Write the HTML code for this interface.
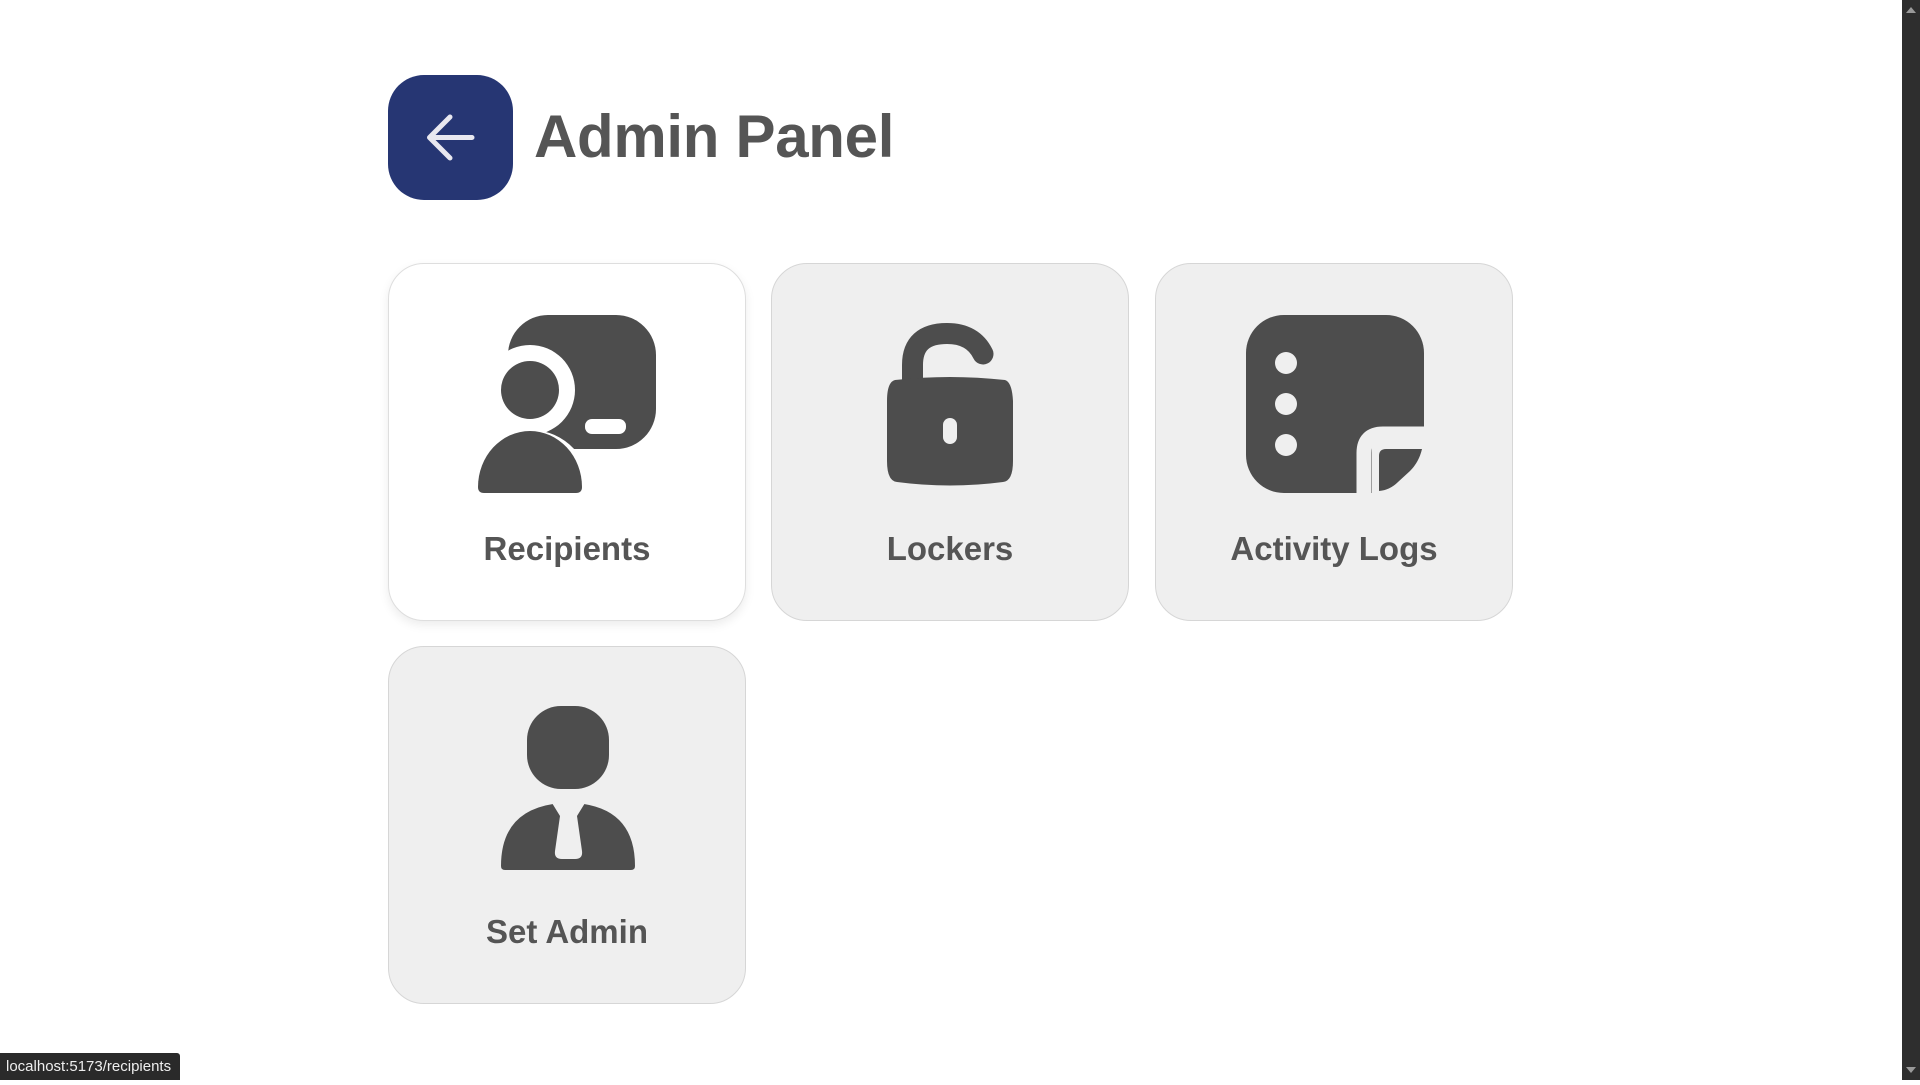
<!DOCTYPE html>
<html><head><meta charset="utf-8"><style>
html,body{margin:0;padding:0;}
body{width:1920px;height:1080px;position:relative;overflow:hidden;background:#fff;font-family:"Liberation Sans",Arial,sans-serif;}
.back{position:absolute;left:388px;top:75px;width:125px;height:125px;border-radius:36px;background:#263673;}
.title{position:absolute;left:534px;top:97px;font-size:60px;font-weight:bold;color:#555;line-height:80px;letter-spacing:-0.3px;}
.card{position:absolute;width:358px;height:358px;border-radius:36px;background:#efefef;border:1px solid #d6d6d6;box-sizing:border-box;}
.card.w{background:#fff;border-color:#dedede;box-shadow:0 4px 10px rgba(0,0,0,0.08);}
.lbl{position:absolute;left:0;right:0;text-align:center;font-size:33px;font-weight:bold;color:#555;}
svg.i{position:absolute;}
.status{position:absolute;left:0;top:1053px;width:180px;height:27px;background:#2a2a2a;color:#eee;font-size:15px;line-height:27px;padding-left:6px;box-sizing:border-box;border-top-right-radius:3px;}
.sb{position:absolute;right:0;top:0;width:18px;height:1080px;background:#2e2e2e;}
</style></head><body>
<div class="back"><svg width="125" height="125" viewBox="0 0 125 125"><path d="M84 62.5H42M62 42L41.5 62.5 62 83" fill="none" stroke="#e8e8f0" stroke-width="5" stroke-linecap="round" stroke-linejoin="round"/></svg></div>
<div class="title">Admin Panel</div>

<div class="card w" style="left:388px;top:263px;">
<svg class="i" style="left:89px;top:51px" width="180" height="180" viewBox="0 0 180 180">
<rect x="30" y="0" width="148" height="134" rx="40" fill="#4d4d4d"/>
<circle cx="52" cy="75" r="45" fill="#fff"/>
<path d="M-8 180 A60 64 0 0 1 114 180Z" fill="#fff"/>
<circle cx="52" cy="75" r="29" fill="#4d4d4d"/>
<path d="M0 172 A52 56 0 0 1 104 172 Q104 178 98 178 L6 178 Q0 178 0 172Z" fill="#4d4d4d"/>
<rect x="107" y="104" width="41" height="15" rx="7" fill="#fff"/>
</svg>
<div class="lbl" style="top:266px">Recipients</div>
</div>

<div class="card" style="left:771px;top:263px;">
<svg class="i" style="left:113px;top:57px" width="130" height="170" viewBox="0 0 130 170">
<path d="M27.5 60V44Q27.5 12.5 62 12.5Q88 12.5 98 33" fill="none" stroke="#4d4d4d" stroke-width="21" stroke-linecap="round"/>
<path d="M10 59Q65 53 120 59Q127 61 128 80V140Q128 160 118 161Q65 168 12 161Q2 160 2 140V80Q2 61 10 59Z" fill="#4d4d4d"/>
<rect x="58" y="97" width="14" height="26" rx="7" fill="#efefef"/>
</svg>
<div class="lbl" style="top:266px">Lockers</div>
</div>

<div class="card" style="left:1155px;top:263px;">
<svg class="i" style="left:90px;top:51px" width="186" height="180" viewBox="0 0 186 180">
<rect x="0" y="0" width="178" height="178" rx="38" fill="#4d4d4d"/>
<path d="M118 182V138Q118 119 137 119H190" fill="none" stroke="#efefef" stroke-width="15"/>
<rect x="126" y="126" width="60" height="60" fill="#efefef"/>
<path d="M133 176V141Q133 134 140 134H176Q173 147 164 156L152 167Q144 175 133 176Z" fill="#4d4d4d"/>
<circle cx="40" cy="48" r="11" fill="#efefef"/>
<circle cx="40" cy="89" r="11" fill="#efefef"/>
<circle cx="40" cy="130" r="11" fill="#efefef"/>
</svg>
<div class="lbl" style="top:266px">Activity Logs</div>
</div>

<div class="card" style="left:388px;top:646px;">
<svg class="i" style="left:112px;top:59px" width="134" height="166" viewBox="0 0 134 166">
<rect x="26" y="0" width="82" height="83" rx="34" fill="#4d4d4d"/>
<path d="M0 160Q0 106 52 98L83 98Q134 106 134 160Q134 164 130 164H4Q0 164 0 160Z" fill="#4d4d4d"/>
<path d="M51 97L59 110L54 145Q53 153 61 153H74Q82 153 81 145L76 110L84 97Z" fill="#efefef"/>
</svg>
<div class="lbl" style="top:266px">Set Admin</div>
</div>

<div class="status">localhost:5173/recipients</div>
<div class="sb">
<svg width="18" height="1080" viewBox="0 0 18 1080"><path d="M4 13L9 7L14 13Z" fill="#9a9a9a"/><path d="M4 1067L9 1073L14 1067Z" fill="#9a9a9a"/></svg>
</div>
</body></html>
